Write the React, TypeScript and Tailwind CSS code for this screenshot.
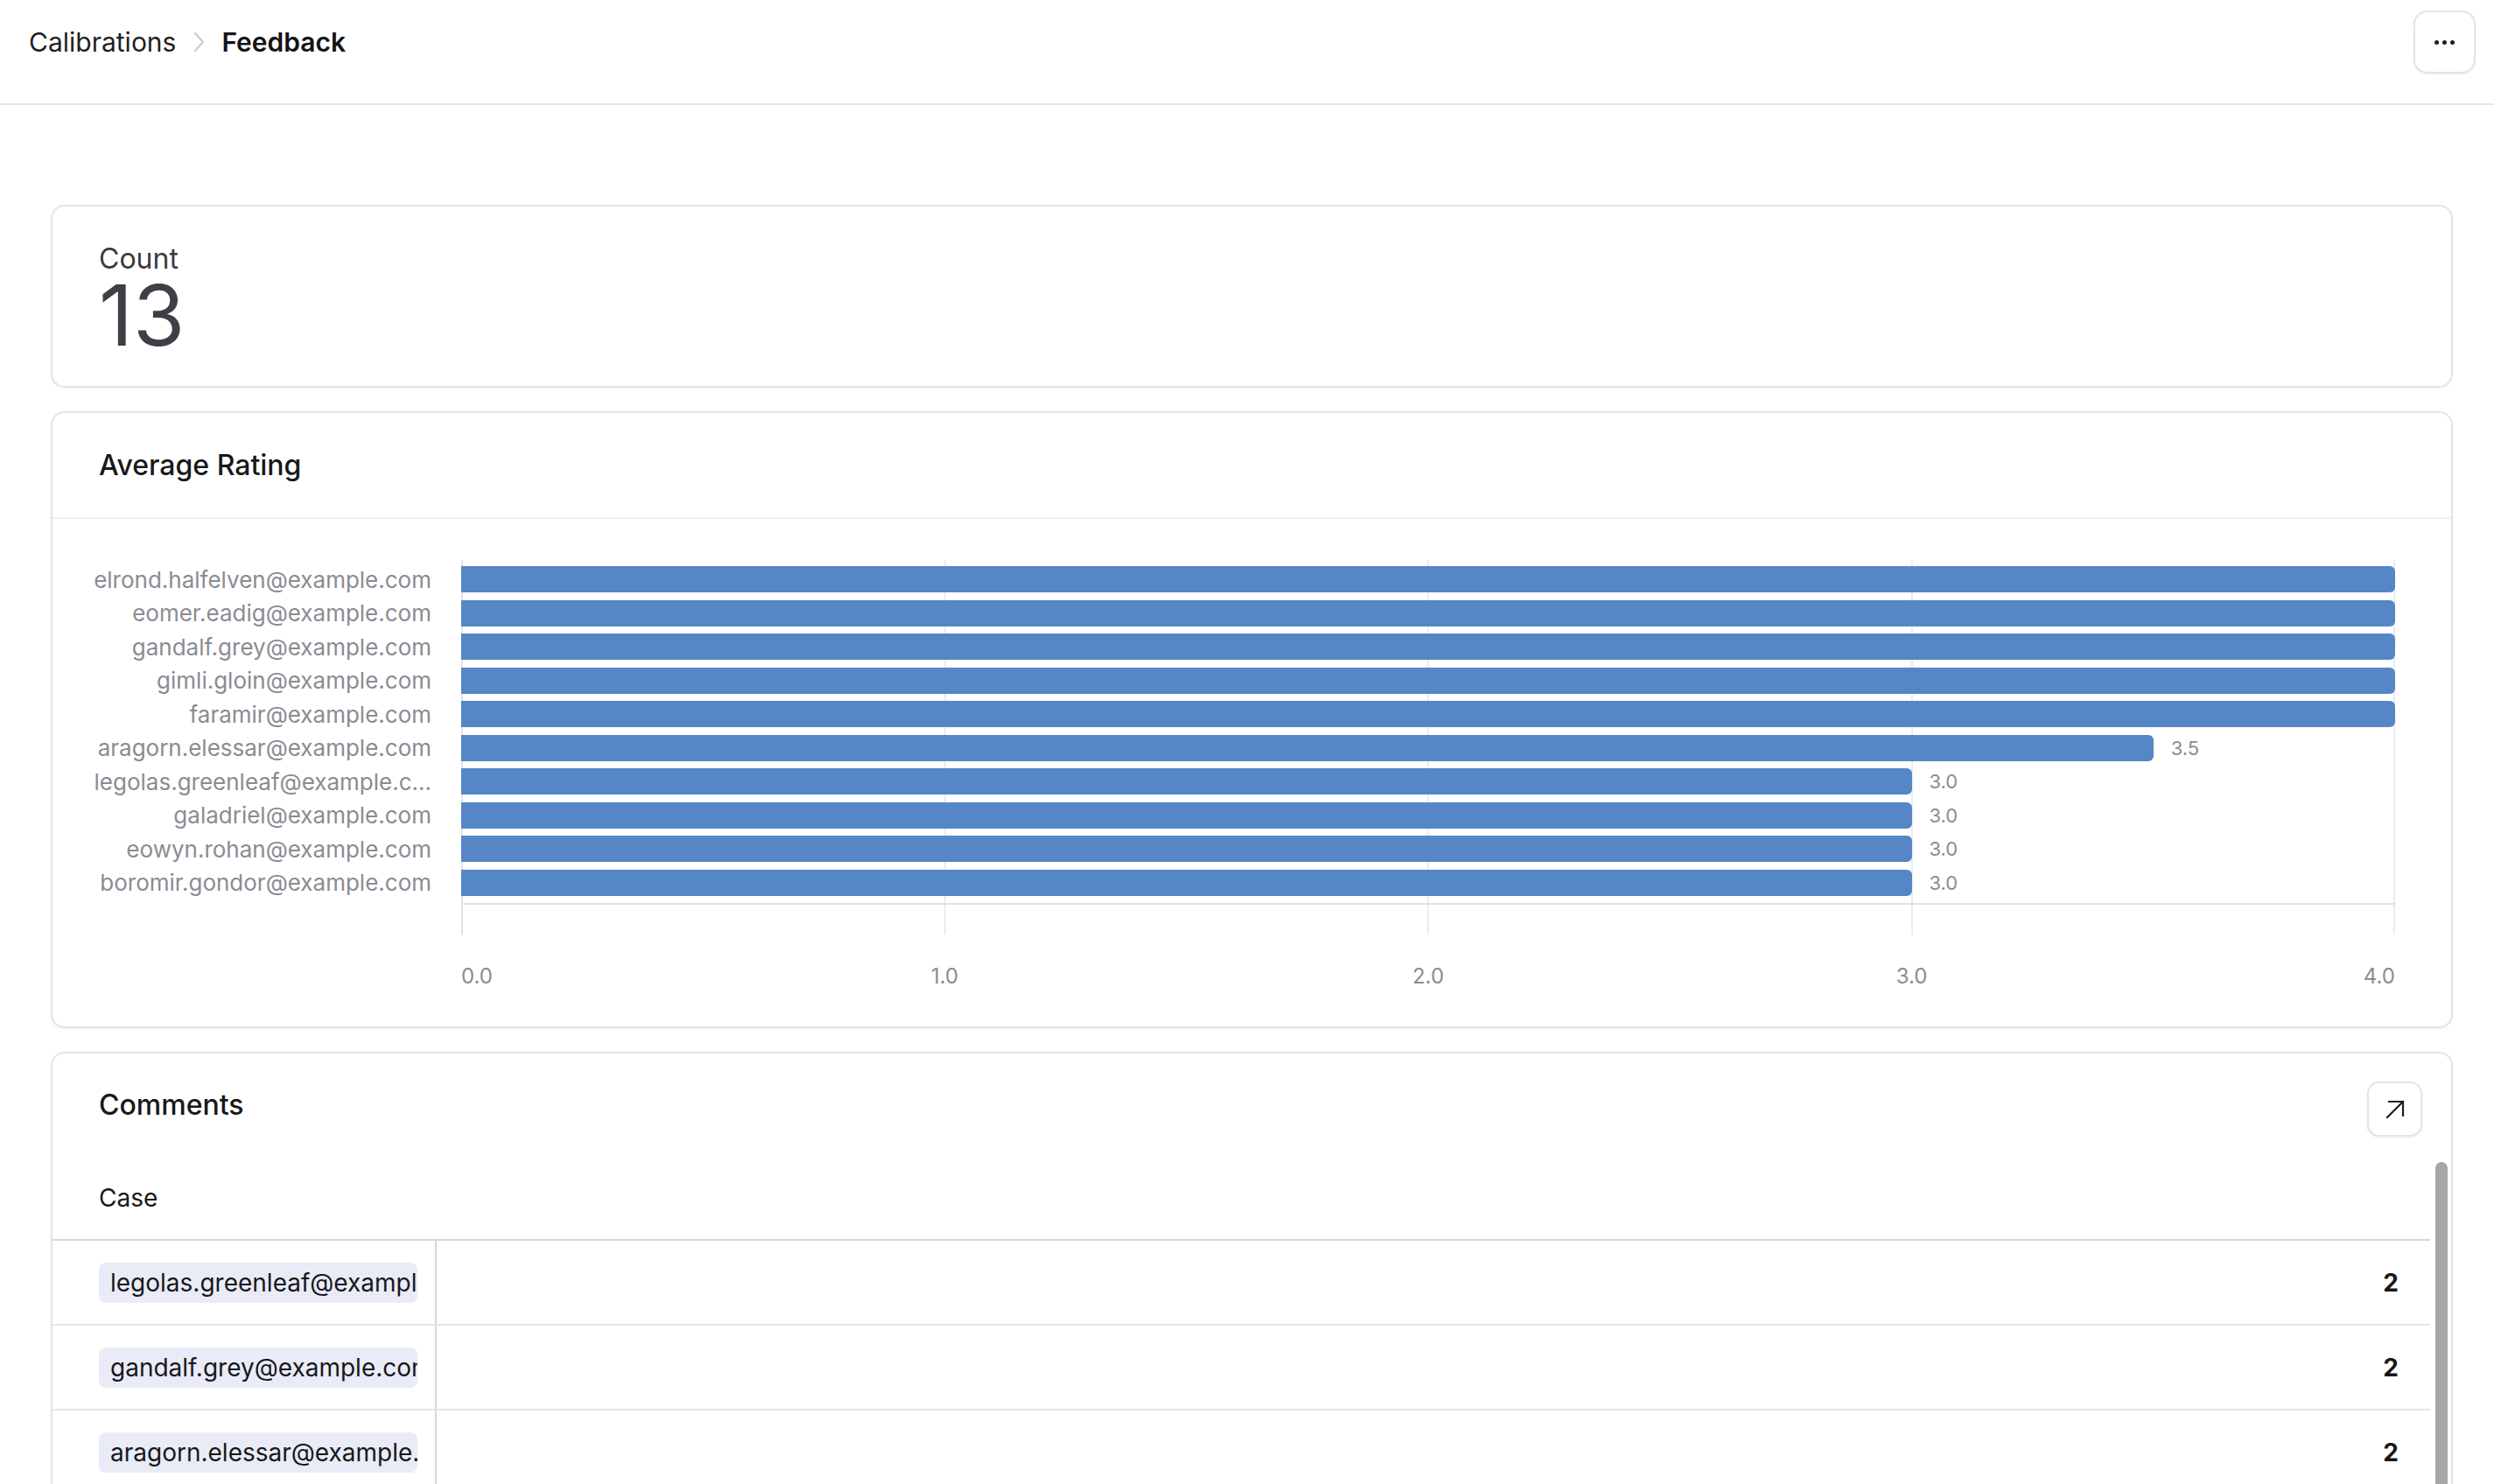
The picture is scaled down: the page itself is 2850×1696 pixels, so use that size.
import React from "react";

const ratings: [string, number][] = [
  ["elrond.halfelven@example.com", 4.0],
  ["eomer.eadig@example.com", 4.0],
  ["gandalf.grey@example.com", 4.0],
  ["gimli.gloin@example.com", 4.0],
  ["faramir@example.com", 4.0],
  ["aragorn.elessar@example.com", 3.5],
  ["legolas.greenleaf@example.c...", 3.0],
  ["galadriel@example.com", 3.0],
  ["eowyn.rohan@example.com", 3.0],
  ["boromir.gondor@example.com", 3.0],
];

const comments: [string, number][] = [
  ["legolas.greenleaf@example.com", 2],
  ["gandalf.grey@example.com", 2],
  ["aragorn.elessar@example.com", 2],
  ["elrond.halfelven@example.com", 1],
];

function Card({ children }: { children: React.ReactNode }) {
  return (
    <div className="rounded-[16px] border-2 border-[#e4e4e7] bg-white shadow-[0_1px_3px_rgba(0,0,0,0.06)] overflow-hidden">
      {children}
    </div>
  );
}

function Chart() {
  return (
    <div className="flex pt-[47px] pb-[42px]">
      <div className="w-[467px] shrink-0 pr-[34px] pt-[3px] flex flex-col">
        {ratings.map(([label]) => (
          <div
            key={label}
            className="h-[38.5px] flex items-center justify-end text-[26px] text-[#8b8b92] whitespace-nowrap overflow-hidden"
          >
            {label}
          </div>
        ))}
      </div>
      <div className="flex-1 mr-[64px] flex flex-col">
        <div className="relative h-[428px]">
          <div className="absolute left-0 top-0 h-full w-[2px] bg-[#e2e2e4]" />
          <div className="absolute left-1/4 top-0 h-full w-[2px] -translate-x-1/2 bg-[#ececee]" />
          <div className="absolute left-1/2 top-0 h-full w-[2px] -translate-x-1/2 bg-[#ececee]" />
          <div className="absolute left-3/4 top-0 h-full w-[2px] -translate-x-1/2 bg-[#ececee]" />
          <div className="absolute right-0 top-0 h-full w-[2px] bg-[#ececee]" />
          <div className="absolute left-0 right-0 top-[392px] h-[2px] bg-[#e2e2e4]" />
          <div className="relative flex flex-col pt-[3px]">
            {ratings.map(([label, v]) => (
              <div key={label} className="h-[38.5px] flex items-center">
                <div
                  className="h-[30px] rounded-r-[6px] bg-[#5586c6] shrink-0"
                  style={{ width: `${(v / 4) * 100}%` }}
                />
                {v < 4 && (
                  <span className="ml-[20px] text-[22px] text-[#8b8b92] leading-none">
                    {v.toFixed(1)}
                  </span>
                )}
              </div>
            ))}
          </div>
        </div>
        <div className="relative h-[30px] mt-[33px] text-[24px] leading-[30px] text-[#8b8b92]">
          <span className="absolute left-0 top-0">0.0</span>
          <span className="absolute left-1/4 top-0 -translate-x-1/2">1.0</span>
          <span className="absolute left-1/2 top-0 -translate-x-1/2">2.0</span>
          <span className="absolute left-3/4 top-0 -translate-x-1/2">3.0</span>
          <span className="absolute right-0 top-0">4.0</span>
        </div>
      </div>
    </div>
  );
}

export default function App() {
  return (
    <div className="min-h-screen bg-white font-['Inter',sans-serif] text-[#18181b]">
      <header className="h-[120px] border-b-2 border-[#e5e5e7] pt-[12px] pl-[33px] pr-[21px]">
        <div className="h-[72px] flex items-center justify-between">
          <nav className="flex items-center text-[30px]">
            <span className="text-[#1f1f23]">Calibrations</span>
            <svg width="14" height="24" viewBox="0 0 14 24" className="mx-[19px]" fill="none">
              <path d="M3 2l9 10-9 10" stroke="#c8c8cd" strokeWidth="2" strokeLinecap="round" strokeLinejoin="round" />
            </svg>
            <span className="font-semibold text-[#141416]">Feedback</span>
          </nav>
          <button className="w-[71px] h-[72px] rounded-[16px] border-2 border-[#e4e4e7] bg-white shadow-[0_1px_3px_rgba(0,0,0,0.08)] flex items-center justify-center gap-[4px]">
            <span className="w-[5px] h-[5px] rounded-full bg-[#1f1f23]" />
            <span className="w-[5px] h-[5px] rounded-full bg-[#1f1f23]" />
            <span className="w-[5px] h-[5px] rounded-full bg-[#1f1f23]" />
          </button>
        </div>
      </header>

      <main className="pl-[58px] pr-[47px] pt-[114px] flex flex-col gap-[27px]">
        <Card>
          <div className="pl-[53px] pt-[44px] pb-[33px] flex flex-col">
            <div className="text-[32px] leading-[32px] text-[#3a3a40]">Count</div>
            <div className="text-[96px] leading-[96px] text-[#3f4047]">13</div>
          </div>
        </Card>

        <Card>
          <div className="h-[121px] border-b-2 border-[#f1f1f3] pl-[53px] pt-[40px]">
            <h2 className="text-[32px] leading-[40px] font-medium">Average Rating</h2>
          </div>
          <Chart />
        </Card>

        <Card>
          <div className="flex items-start justify-between pl-[53px] pr-[33px] pt-[32px]">
            <h2 className="mt-[7px] text-[32px] leading-[40px] font-medium">Comments</h2>
            <button className="w-[63px] h-[63px] rounded-[14px] border-2 border-[#e4e4e7] bg-white shadow-[0_1px_3px_rgba(0,0,0,0.08)] flex items-center justify-center">
              <svg width="24" height="24" viewBox="0 0 24 24" fill="none">
                <path d="M3 21L21 3M5 3h16v16" stroke="#1f1f23" strokeWidth="2.2" strokeLinecap="square" />
              </svg>
            </button>
          </div>
          <div className="flex mt-[23px]">
            <div className="flex-1 flex flex-col">
              <div className="h-[96px] border-b-2 border-[#d6d6d9] pl-[53px] flex items-center text-[28px]">
                Case
              </div>
              {comments.map(([email, n]) => (
                <div key={email} className="h-[97px] border-b-2 border-[#e6e6e8] flex">
                  <div className="w-[439px] shrink-0 border-r-2 border-[#d6d6d9] pl-[53px] pr-[20px] flex items-center">
                    <div className="w-full h-[46px] rounded-[8px] bg-[#e9ecf7] pl-[13px] flex items-center overflow-hidden whitespace-nowrap text-[28px] text-[#18181b]">
                      {email}
                    </div>
                  </div>
                  <div className="flex-1 flex items-center justify-end pr-[36px] text-[28px] font-bold">
                    {n}
                  </div>
                </div>
              ))}
            </div>
            <div className="w-[14px] ml-[6px] mr-[4px] pt-[6px]">
              <div className="h-[600px] rounded-full bg-[#a6a6a6]" />
            </div>
          </div>
        </Card>
      </main>
    </div>
  );
}
